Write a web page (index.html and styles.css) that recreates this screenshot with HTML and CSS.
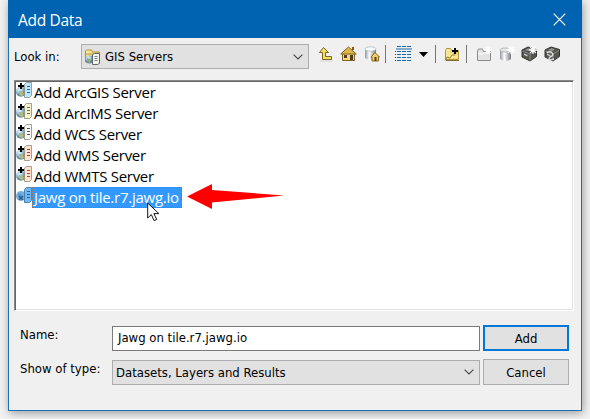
FILE: index.html
```html
<!DOCTYPE html>
<html lang="en">
<head>
<meta charset="utf-8">
<title>Add Data</title>
<link rel="stylesheet" href="styles.css">
</head>
<body>
<svg class="defs" width="0" height="0">
  <defs>
    <linearGradient id="gold" x2="1" y2="1"><stop stop-color="#fff3a8"/><stop offset="1" stop-color="#d9b84e"/></linearGradient>
    <linearGradient id="metal"><stop stop-color="#8f999f"/><stop offset=".4" stop-color="#fff"/><stop offset="1" stop-color="#777"/></linearGradient>
    <radialGradient id="globe" cx=".35" cy=".3"><stop stop-color="#e4f4ff"/><stop offset=".6" stop-color="#9cc4dd"/><stop offset="1" stop-color="#5f8ba6"/></radialGradient>
    <symbol id="server" viewBox="0 0 16 16">
      <circle cx="5" cy="9.800" r="5" fill="url(#globe)"/>
      <path d="M3 9l3 0 2 3-2 2.500-3-2z" fill="#b3bb7c"/>
      <path d="M8.500 2l2-1.500h5v13l-2 2h-5z" fill="currentColor" stroke="#8b8b7b" stroke-width=".8"/>
      <path d="M4 1h2v2h2v2H6v2H4V5H2V3h2z" fill="#000"/>
    </symbol>
    <symbol id="spark" viewBox="0 0 7 7"><path d="M3.500 0v7M0 3.500h7M1 1l5 5M6 1L1 6" stroke="#fff" stroke-width="1.100"/></symbol>
    <symbol id="toolbox" viewBox="0 0 17 16">
      <path d="M1 4l6-3 8.500 2.500v7L9 15l-8-4z" fill="#55554f" stroke="#33332f"/>
      <path d="M1.500 5L9 8l6-3.500M9 8v6.500" fill="none" stroke="#8c8c88"/>
      <path d="M4 4l3.500-1.800L11 3.500 8 5z" fill="#999"/>
      <path d="M3 7.500l3.500 1.500v1.500L3 9z" fill="#ccc"/>
    </symbol>
  </defs>
</svg>
<div class="dialog">
  <header class="titlebar">
    <h1>Add Data</h1>
    <svg class="close" width="13" height="13" viewBox="0 0 13 13"><path d="M.7.7l11.600 11.600M12.300.7L.7 12.300" stroke="#fff" stroke-width="1.200"/></svg>
  </header>
  <div class="toolbar">
    <span class="lookin">Look in:</span>
    <div class="combo location">
      <svg width="16" height="16" viewBox="0 0 16 16"><path d="M.5 13V2l1-1h5l1 2h7v10z" fill="url(#gold)" stroke="#af8e38"/><path d="M1 5h13" stroke="#b99635"/><circle cx="4.500" cy="10.500" r="4" fill="url(#globe)"/><path d="M2 9l3 1v4l-3-2z" fill="#9bad52"/><path d="M7.500 5.500l2-1h5v10l-2 1h-5z" fill="#f4f3e8" stroke="#5f6670"/><path d="M9.500 7.500h3M9.500 9.500h3M9.500 11.500h3" stroke="#7b8692"/></svg>
      <span>GIS Servers</span>
      <svg class="chevron" width="10" height="6" viewBox="0 0 10 6"><path d="M.6.6L5 5 9.400.6"/></svg>
    </div>
    <div class="tools">
      <svg class="up" width="16" height="16" viewBox="0 0 16 16"><path d="M5.500 1.500l5 5h-3v4h6v3h-9v-7h-3z" fill="#f2dc6b" stroke="#7d671d"/><path d="M2 15h13" stroke="#d3d3d3"/></svg>
      <svg class="home" width="17" height="16" viewBox="0 0 17 16"><path d="M2.500 7v7.500h12V7" fill="#f3d879" stroke="#806322"/><path d="M.7 8l7.800-7 7.800 7z" fill="#ddb84b" stroke="#806322"/><path d="M12 1v3h2V1z" fill="#8b5728"/><path d="M4 9h3v3H4zM10 9h3v5h-3z" fill="#503d27"/></svg>
      <svg class="db" width="16" height="16" viewBox="0 0 16 16"><path d="M1 3v9q5 4 11 0V3z" fill="url(#metal)"/><ellipse cx="6.500" cy="3" rx="5.500" ry="2.200" fill="#f5fbff" stroke="#a4bac8" stroke-width=".8"/><path d="M7 11l4-4.500 4.500 4.500h-1v4H8v-4z" fill="#edce69" stroke="#8a651f"/><path d="M10.500 11h2v4h-2z" fill="#5d3c17"/></svg>
      <i class="sep s1"></i>
      <svg class="grid" width="17" height="16" viewBox="0 0 17 16"><path d="M2 .5h14" stroke="#1769b2" stroke-dasharray="4 1"/><path d="M1 3h16" stroke="#1769b2"/><path d="M2 5.500h15M2 8.500h15M2 11.500h15M2 14.500h15" stroke="#1769b2" stroke-width="1.200" stroke-dasharray="4 1"/><path d="M.5 5v11" stroke="#444" stroke-dasharray="1 2"/></svg>
      <svg class="caret" width="9" height="5" viewBox="0 0 9 5"><path d="M0 0h9L4.500 5z"/></svg>
      <i class="sep s2"></i>
      <svg class="connect" width="17" height="16" viewBox="0 0 17 16"><path d="M1.500 12.500v-8l1-2h4l1 2h7v9H2z" fill="url(#gold)" stroke="#b3943e"/><path d="M2 7.500h6l2 1h4v4H2z" fill="#f9e791"/><path d="M1 14.500l2-3.500 3 1 2-3h3" fill="none" stroke="#927c32"/><path d="M2 14.500h13" stroke="#806c2c"/><path d="M10 2h2v2h2v2h-2v2h-2V6H8V4h2z" fill="#000"/></svg>
      <i class="sep s3"></i>
      <svg class="newfolder" width="16" height="16" viewBox="0 0 16 16"><path d="M1.500 14.500V5l1-2h4l1 2.500h7v9z" fill="#e4e4e4" stroke="#8a8a8a"/><path d="M2 8h5l1-1h6" fill="none" stroke="#fff"/><use href="#spark" x="8" y="0" width="8" height="8"/></svg>
      <svg class="newdb" width="16" height="16" viewBox="0 0 16 16"><path d="M1 4v9q5.500 4 11 0V4z" fill="url(#metal)"/><ellipse cx="6.500" cy="4" rx="5.500" ry="2" fill="#e5e5e5" stroke="#aaa" stroke-width=".8"/><use href="#spark" x="8" y="0" width="8" height="8"/></svg>
      <svg class="box1" width="17" height="16"><use href="#toolbox" width="17" height="16"/><use href="#spark" x="8" y="0" width="8" height="8"/></svg>
      <svg class="box2" width="17" height="16" viewBox="0 0 17 16"><use href="#toolbox" width="17" height="16"/><path d="M3 7q1-2 4-1 3 2 1 4l-2 1q-2 2 0 3l4-1" stroke="#ddd" stroke-width="1.500" fill="none"/></svg>
    </div>
  </div>
  <ul class="list">
    <li><svg class="blue" width="16" height="16"><use href="#server"/><path d="M11 4.500h3M11 7.500h3M11 10.500h3" stroke="#24679e"/></svg><span>Add ArcGIS Server</span></li>
    <li><svg class="cream" width="16" height="16"><use href="#server"/><path d="M11 4.500h3M11 7.500h3M11 10.500h3" stroke="#6b6b4d"/></svg><span>Add ArcIMS Server</span></li>
    <li><svg class="white" width="16" height="16"><use href="#server"/><path d="M11 4.500h3M11 7.500h3M11 10.500h3" stroke="#555"/></svg><span>Add WCS Server</span></li>
    <li><svg class="pink" width="16" height="16"><use href="#server"/><path d="M11 4.500h3M11 7.500h3M11 10.500h3" stroke="#b83e28"/></svg><span>Add WMS Server</span></li>
    <li><svg class="pink" width="16" height="16"><use href="#server"/><path d="M11 4.500h3M11 7.500h3M11 10.500h3" stroke="#b83e28"/></svg><span>Add WMTS Server</span></li>
    <li><svg width="16" height="16" viewBox="0 0 16 16"><circle cx="5" cy="9" r="5" fill="#74afe0"/><path d="M2 6l3 1 2 5-4 1z" fill="#5c98c6"/><path d="M8.500 2.500l2-2h5v13l-2 2h-5z" fill="#74b6ef" stroke="#4387bb"/><path d="M11 4.500h3M11 7.500h3M11 10.500h3" stroke="#26659c"/><path d="M3 9l4 4M7 9l-4 4" stroke="#295c87" stroke-width="1.300"/></svg><span class="selected">Jawg on tile.r7.jawg.io</span></li>
  </ul>
  <div class="form">
    <span class="label">Name:</span>
    <div class="field">Jawg on tile.r7.jawg.io</div>
    <div class="button primary">Add</div>
    <span class="label">Show of type:</span>
    <div class="combo type"><span>Datasets, Layers and Results</span><svg class="chevron" width="10" height="6" viewBox="0 0 10 6"><path d="M.6.6L5 5 9.400.6"/></svg></div>
    <div class="button">Cancel</div>
  </div>
</div>
<svg class="arrow" width="98" height="26" viewBox="0 0 98 26"><path d="M0 12.500L25 0v6l72 5.500-72 7V25z" fill="red"/></svg>
<svg class="pointer" width="13" height="20" viewBox="0 0 13 20"><path d="M.7 1v15l3.600-3.400 2.800 6 2.600-1.200-2.800-5.800h5z" fill="#fff" stroke="#111"/></svg>
</body>
</html>
```
FILE: styles.css
```css
* { box-sizing: border-box; }
body {
  margin: 0;
  width: 590px;
  height: 419px;
  overflow: hidden;
  background: #f3f3f3;
  color: #000;
  font: 13px "DejaVu Sans Condensed", "DejaVu Sans", sans-serif;
  font-stretch: condensed;
}
svg { display: block; flex: none; }
.defs { position: absolute; }
.dialog {
  width: 574px;
  height: 411px;
  margin-left: 8px;
  border: 1px solid #1b70b8;
  border-top: 0;
  background: #f0f0f0;
  box-shadow: 1px 2px 9px #999;
}
.titlebar {
  height: 38px;
  margin: 0 -1px;
  padding: 0 16px 0 10px;
  display: flex;
  align-items: center;
  justify-content: space-between;
  background: #0063b1;
  color: #fff;
}
h1 { margin: 1px 0 0; font: 15.5px "Open Sans", sans-serif; letter-spacing: -.3px; }
.toolbar { height: 42px; display: flex; padding: 6px 0 0 5px; }
.lookin { width: 67px; padding-top: 5px; line-height: 16px; }
.combo {
  display: flex;
  align-items: center;
  height: 25px;
  border: 1px solid #adadad;
  background: #e1e1e1;
}
.location { width: 228px; padding: 0 5px 0 3px; gap: 4px; }
.chevron { margin-left: auto; fill: none; stroke: #444; stroke-width: 1.1; }
.tools { display: flex; height: 20px; align-items: center; margin-left: 9px; }
.home { margin-left: 6px; }
.db { margin-left: 7px; }
.sep { width: 1px; height: 18px; background: #777; }
.s1 { margin-left: 5px; }
.grid { margin-left: 9px; }
.caret { margin-left: 7px; }
.s2 { margin-left: 7px; }
.connect { margin-left: 8px; }
.s3 { margin-left: 5px; }
.newfolder { margin-left: 9px; }
.newdb { margin-left: 7px; }
.box1 { margin-left: 6px; }
.box2 { margin-left: 6px; }
.list {
  width: 560px;
  height: 231px;
  margin: 0 0 0 5px;
  padding: 0;
  list-style: none;
  background: #fff;
  border: 1px solid;
  border-color: #888 #fff #fff #888;
  box-shadow: inset 1px 1px #666, inset -1px -1px #e3e3e3;
  font: 15px "Open Sans", sans-serif;
}
.list li { height: 21px; display: flex; margin-left: 1px; }
.list li:first-child { margin-top: 1px; }
.list span { height: 21px; padding: 0 2px; line-height: 21px; letter-spacing: -.3px; white-space: nowrap; }
.list .selected {
  width: 150px;
  letter-spacing: -.26px;
  background: #3399ff;
  color: #fff;
  outline: 1px dotted #b86b26;
  outline-offset: -1px;
}
.blue { color: #bce5ff; }
.cream { color: #f5f0cf; }
.white { color: #f8f8f8; }
.pink { color: #ffe2cf; }
.form {
  display: grid;
  grid-template-columns: 92px 368px 86px;
  grid-template-rows: 26px 26px;
  row-gap: 8px;
  align-items: center;
  padding: 14px 0 0 11px;
}
.label { align-self: start; line-height: 17px; padding-top: 1px; }
.field {
  height: 25px;
  padding: 0 5px;
  border: 1px solid #7a7a7a;
  background: #fff;
  line-height: 22px;
}
.type { padding: 0 5px 0 3px; }
.button {
  height: 26px;
  margin-left: 3px;
  margin-right: -3px;
  border: 1px solid #adadad;
  background: #e1e1e1;
  text-align: center;
  line-height: 25px;
}
.primary { border: 2px solid #0078d7; line-height: 23px; }
.arrow { position: absolute; left: 187px; top: 184px; }
.pointer { position: absolute; left: 147px; top: 202px; }
```
